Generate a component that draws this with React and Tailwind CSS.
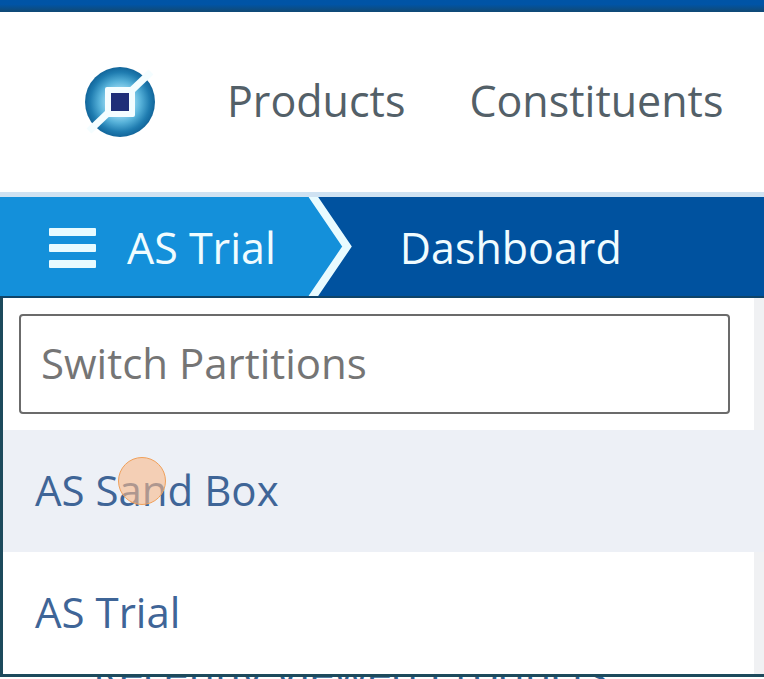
const partitions = [
  { name: "AS Sand Box", active: true },
  { name: "AS Trial", active: false },
];

function Logo() {
  return (
    <svg className="h-[72px] w-[72px]" viewBox="0 0 72 72" role="img" aria-label="Home">
      <defs>
        <radialGradient id="ring">
          <stop offset="0.3" stopColor="#a5e2f8" />
          <stop offset="0.6" stopColor="#55b0d8" />
          <stop offset="0.85" stopColor="#1f7cb0" />
          <stop offset="1" stopColor="#12659a" />
        </radialGradient>
      </defs>
      <circle cx="36" cy="36" r="35" fill="url(#ring)" />
      <path d="M5 65 L67 6" stroke="#f4fdff" strokeWidth="7" />
      <rect x="21" y="21" width="30" height="30" rx="2" fill="#f4fdff" />
      <rect x="27" y="27" width="18" height="18" fill="#1f2f78" />
    </svg>
  );
}

function App() {
  return (
    <div className="h-screen overflow-hidden bg-white font-['Open_Sans','Noto_Sans',sans-serif] text-[42px] leading-[56px]">
      <div className="h-3 border-b border-[#0f4a78] bg-linear-to-b from-[#0054a6] from-40% to-[#0f4a78]" />

      {/* Main navigation */}
      <header className="flex h-[180px] items-center pl-[84px]">
        <a href="#home">
          <Logo />
        </a>
        <nav className="flex gap-16 pb-0.5 pl-[71px] text-[43px] text-[#536068]">
          <a href="#products">Products</a>
          <a href="#constituents">Constituents</a>
        </nav>
      </header>

      {/* Breadcrumb bar */}
      <div className="flex h-[106px] border-t-[5px] border-b-2 border-t-[#cfe2f2] border-b-[#0f4468] bg-[#00529f] text-[43px] text-[#f0fcff]">
        <button className="flex items-center gap-[30px] bg-[#1490da] pt-0.5 pl-[49px]">
          <svg className="h-10 w-12" viewBox="0 0 48 40" fill="#e8fbff" aria-hidden="true">
            <rect x="0" y="0" width="47" height="8" rx="1" />
            <rect x="0" y="16" width="47" height="8" rx="1" />
            <rect x="0" y="32" width="47" height="8" rx="1" />
          </svg>
          <span>AS Trial</span>
        </button>
        <svg className="h-full w-20 shrink-0" viewBox="0 0 80 100" preserveAspectRatio="none" aria-hidden="true">
          <path d="M0 0 H36 L70 50 L36 100 H0 Z" fill="#1490da" />
          <path d="M36 -2 L71 50 L36 102" fill="none" stroke="#e8fbff" strokeWidth="8" />
        </svg>
        <h1 className="flex items-center pt-0.5 pl-11">Dashboard</h1>
      </div>

      {/* Partition switcher, opens over the page content */}
      <div className="relative z-10 border-b-[3px] border-l-[3px] border-[#1d4a5c] bg-[#f0f1f3]">
        <div className="mr-[10px] bg-white py-4 pr-6 pl-4">
          <input
            type="text"
            aria-label="Switch Partitions"
            placeholder="Switch Partitions"
            className="h-[100px] w-full rounded border-2 border-[#6b6b6b] bg-white px-5 pb-1 placeholder:text-[#757575]"
          />
        </div>
        <ul className="text-[#3f6597]">
          {partitions.map((item) => (
            <li key={item.name} className={item.active ? "bg-[#edf0f6]" : "mr-[10px] bg-white"}>
              <a href="#partition" className="relative flex h-[122px] items-center pb-0.5 pl-8">
                {item.name}
                {item.active && (
                  <span className="absolute top-[27px] left-[115px] h-12 w-12 rounded-full border border-[#f0a05a] bg-[#f9b98a]/60" />
                )}
              </a>
            </li>
          ))}
        </ul>
      </div>

      <h2 className="-mt-8 pl-[93px] text-[43px] text-[#2f5f8f]">Recently Viewed Products</h2>
    </div>
  );
}

export default App;
